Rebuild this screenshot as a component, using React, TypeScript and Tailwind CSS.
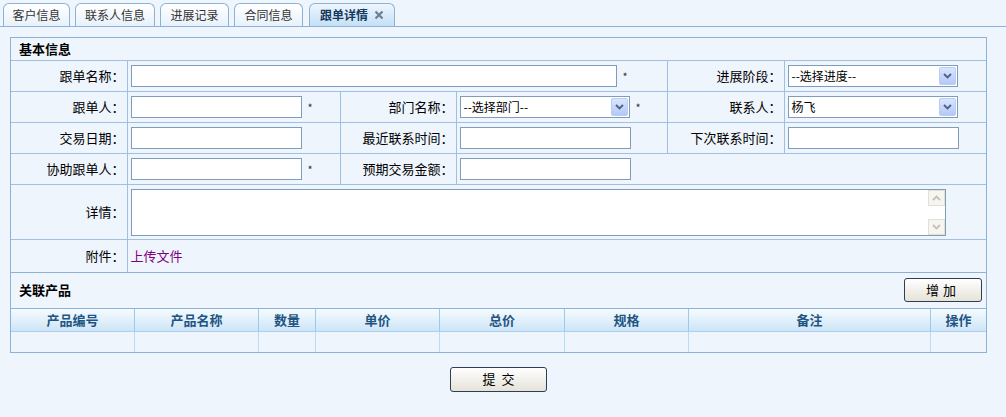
import { ReactNode } from "react";

const TABS = [
  { label: "客户信息", w: "w-[67px]" },
  { label: "联系人信息", w: "w-[80px]" },
  { label: "进展记录", w: "w-[69px]" },
  { label: "合同信息", w: "w-[69px]" },
];

const COLS = [
  { label: "产品编号", w: "w-[123px]" },
  { label: "产品名称", w: "w-[124px]" },
  { label: "数量", w: "w-[57px]" },
  { label: "单价", w: "w-[124px]" },
  { label: "总价", w: "w-[125px]" },
  { label: "规格", w: "w-[124px]" },
  { label: "备注", w: "w-[242px]" },
  { label: "操作", w: "w-[56px]" },
];

function TextBox({ w }: { w: string }) {
  return <div className={`${w} h-[22px] border border-[#7f9db9] bg-white`} />;
}

function Star() {
  return <span className="ml-[6px] text-[11px] text-[#333]">*</span>;
}

function Chevron({ up, color }: { up?: boolean; color: string }) {
  return (
    <svg width="9" height="6" viewBox="0 0 9 6" className={up ? "rotate-180" : ""}>
      <path d="M1 1 L4.5 4.5 L8 1" fill="none" stroke={color} strokeWidth="1.8" />
    </svg>
  );
}

function Select({ value }: { value: string }) {
  return (
    <div className="w-[170px] h-[22px] border border-[#7f9db9] bg-white flex items-center">
      <span className="flex-1 pl-[3px] text-[12px] text-black leading-none">{value}</span>
      <div className="w-[17px] h-[18px] mr-[1px] rounded-[2px] border border-[#b9cdf5] bg-gradient-to-b from-[#d9e5fd] to-[#b4c9f6] flex items-center justify-center">
        <Chevron color="#4d6185" />
      </div>
    </div>
  );
}

function Label({ children }: { children: ReactNode }) {
  return (
    <td className="border-t border-l first:border-l-0 border-[#9fc0e2] text-right pr-[2px] text-[13px] text-black">
      {children}
    </td>
  );
}

function Field({ children, span }: { children?: ReactNode; span?: number }) {
  return (
    <td colSpan={span} className="border-t border-l border-[#9fc0e2] pl-[3px]">
      <div className="flex items-center">{children}</div>
    </td>
  );
}

export default function App() {
  return (
    <div className="w-[1006px] h-[417px] overflow-hidden bg-[#eff5fd] font-['Noto_Sans_CJK_SC',sans-serif] text-[12px]">
      {/* Tabs */}
      <div className="flex items-end gap-[5px] pl-[3px] pt-[3px] h-[27px] border-b border-[#8db2d8]">
        {TABS.map((t) => (
          <div
            key={t.label}
            className={`${t.w} h-[23px] rounded-t-[6px] border border-b-0 border-[#8db2d8] bg-gradient-to-b from-white to-[#e7f1fb] flex items-center justify-center text-[12px] text-[#333]`}
          >
            {t.label}
          </div>
        ))}
        <div className="w-[86px] h-[23px] ml-[1px] rounded-t-[6px] border border-b-0 border-[#8db2d8] bg-gradient-to-b from-[#eef6fd] to-[#c4e0f6] flex items-center justify-center gap-[6px] text-[12px] font-bold text-[#15395e]">
          跟单详情
          <svg width="10" height="10" viewBox="0 0 10 10">
            <path d="M1.5 1.5 L8.5 8.5 M8.5 1.5 L1.5 8.5" stroke="#6b7f95" strokeWidth="2.2" />
          </svg>
        </div>
      </div>

      {/* Panel */}
      <div className="ml-[10px] mt-[10px] w-[977px] border border-[#8db2d8]">
        <div className="h-[22px] pl-[8px] flex items-center text-[13px] font-bold text-black">基本信息</div>

        <table className="w-full table-fixed border-collapse">
          <colgroup>
            <col className="w-[116px]" />
            <col className="w-[213px]" />
            <col className="w-[116px]" />
            <col className="w-[211px]" />
            <col className="w-[117px]" />
            <col />
          </colgroup>
          <tbody>
            <tr className="h-[31px]">
              <Label>跟单名称：</Label>
              <Field span={3}>
                <TextBox w="w-[486px]" />
                <Star />
              </Field>
              <Label>进展阶段：</Label>
              <Field>
                <Select value="--选择进度--" />
              </Field>
            </tr>
            <tr className="h-[31px]">
              <Label>跟单人：</Label>
              <Field>
                <TextBox w="w-[171px]" />
                <Star />
              </Field>
              <Label>部门名称：</Label>
              <Field>
                <Select value="--选择部门--" />
                <Star />
              </Field>
              <Label>联系人：</Label>
              <Field>
                <Select value="杨飞" />
              </Field>
            </tr>
            <tr className="h-[31px]">
              <Label>交易日期：</Label>
              <Field>
                <TextBox w="w-[171px]" />
              </Field>
              <Label>最近联系时间：</Label>
              <Field>
                <TextBox w="w-[171px]" />
              </Field>
              <Label>下次联系时间：</Label>
              <Field>
                <TextBox w="w-[171px]" />
              </Field>
            </tr>
            <tr className="h-[31px]">
              <Label>协助跟单人：</Label>
              <Field>
                <TextBox w="w-[171px]" />
                <Star />
              </Field>
              <Label>预期交易金额：</Label>
              <Field>
                <TextBox w="w-[171px]" />
              </Field>
              <td colSpan={2} className="border-t border-[#9fc0e2]" />
            </tr>
            <tr className="h-[55px]">
              <Label>详情：</Label>
              <Field span={5}>
                <div className="w-[815px] h-[47px] border border-[#7f9db9] bg-white flex justify-end">
                  <div className="w-[17px] flex flex-col justify-between">
                    <div className="h-[16px] border border-[#e2e0d8] bg-[#f6f5f0] flex items-center justify-center">
                      <Chevron up color="#c4c2b8" />
                    </div>
                    <div className="h-[16px] border border-[#e2e0d8] bg-[#f6f5f0] flex items-center justify-center">
                      <Chevron color="#c4c2b8" />
                    </div>
                  </div>
                </div>
              </Field>
            </tr>
            <tr className="h-[32px]">
              <Label>附件：</Label>
              <Field span={5}>
                <span className="text-[13px] text-[#800080]">上传文件</span>
              </Field>
            </tr>
          </tbody>
        </table>

        {/* Related products */}
        <div className="h-[36px] border-t border-[#8db2d8] pl-[8px] pr-[4px] flex items-center justify-between">
          <span className="text-[13px] font-bold text-black">关联产品</span>
          <button className="w-[78px] h-[24px] rounded-[3px] border border-[#2f3f52] bg-gradient-to-b from-white to-[#e5e2d8] text-[13px] text-black tracking-[4px]">
            增加
          </button>
        </div>

        <div className="flex h-[23px] border-t border-[#8db2d8] bg-gradient-to-b from-[#f6fbff] to-[#cde5f7]">
          {COLS.map((c, i) => (
            <div
              key={c.label}
              className={`${c.w} ${i > 0 ? "border-l border-[#9ccaea]" : ""} flex items-center justify-center text-[13px] font-bold text-[#1f5583]`}
            >
              {c.label}
            </div>
          ))}
        </div>
        <div className="flex h-[21px] border-t border-[#a9d0ee]">
          {COLS.map((c, i) => (
            <div key={c.label} className={`${c.w} ${i > 0 ? "border-l border-[#b9dbf3]" : ""}`} />
          ))}
        </div>
      </div>

      <div className="ml-[10px] w-[977px] mt-[14px] flex justify-center">
        <button className="w-[97px] h-[25px] rounded-[3px] border border-[#2f3f52] bg-gradient-to-b from-white to-[#e5e2d8] text-[13px] text-black tracking-[6px] pl-[6px]">
          提交
        </button>
      </div>
    </div>
  );
}
